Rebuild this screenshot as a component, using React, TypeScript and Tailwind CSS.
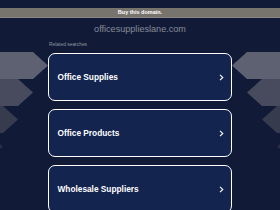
const searches = ['Office Supplies', 'Office Products', 'Wholesale Suppliers']

const shades = ['#5e6171', '#474b5d', '#363b4e', '#272d42']

/** Stacked arrow stripes on the page edges, pointing toward the cards. */
function Arrows({ side }: { side: 'left' | 'right' }) {
  return (
    <svg
      width="48"
      height="160"
      viewBox="0 0 48 160"
      className={side === 'right' ? '-scale-x-100 mt-px' : 'mt-px'}
    >
      {shades.map((fill, i) => {
        const top = i * 27
        const back = 33 - i * 15
        const tip = 48 - i * 15
        return (
          <polygon
            key={fill}
            fill={fill}
            points={`0,${top} ${back},${top} ${tip},${top + 13.5} ${back},${top + 27} 0,${top + 27}`}
          />
        )
      })}
    </svg>
  )
}

function SearchCard({ label }: { label: string }) {
  return (
    <div className="box-border flex h-[48px] w-[184px] items-center justify-between rounded-[7px] border-[1.5px] border-white bg-[#13244f] pl-[8.5px] pr-[7px]">
      <span className="text-[8.3px] font-bold text-white">{label}</span>
      <svg width="5" height="7" viewBox="0 0 5 7" className="shrink-0">
        <polyline points="1,0.8 3.8,3.5 1,6.2" fill="none" stroke="white" strokeWidth="1.1" />
      </svg>
    </div>
  )
}

export default function App() {
  return (
    <div className="h-[210px] w-[280px] overflow-hidden bg-[#111b37] font-['Liberation_Sans',Arial,sans-serif]">
      <div className="h-[8px]" />
      <div className="flex h-[10px] items-center justify-center border-b border-[#8a8781] bg-[#77736d]">
        <span className="text-[5.5px] font-bold text-white">Buy this domain.</span>
      </div>
      <div className="flex h-[24px] items-center justify-center">
        <span className="text-[9.1px] text-[#868b98]">officesupplieslane.com</span>
      </div>
      <div className="flex">
        <div className="pt-[9px]">
          <Arrows side="left" />
        </div>
        <div className="flex flex-col">
          <div className="h-[8px] pl-px text-[4.9px] leading-[6px] text-[#9096a3]">Related searches</div>
          <div className="mt-[3px] flex flex-col gap-[8px]">
            {searches.map((s) => (
              <SearchCard key={s} label={s} />
            ))}
          </div>
        </div>
        <div className="pt-[9px]">
          <Arrows side="right" />
        </div>
      </div>
    </div>
  )
}
